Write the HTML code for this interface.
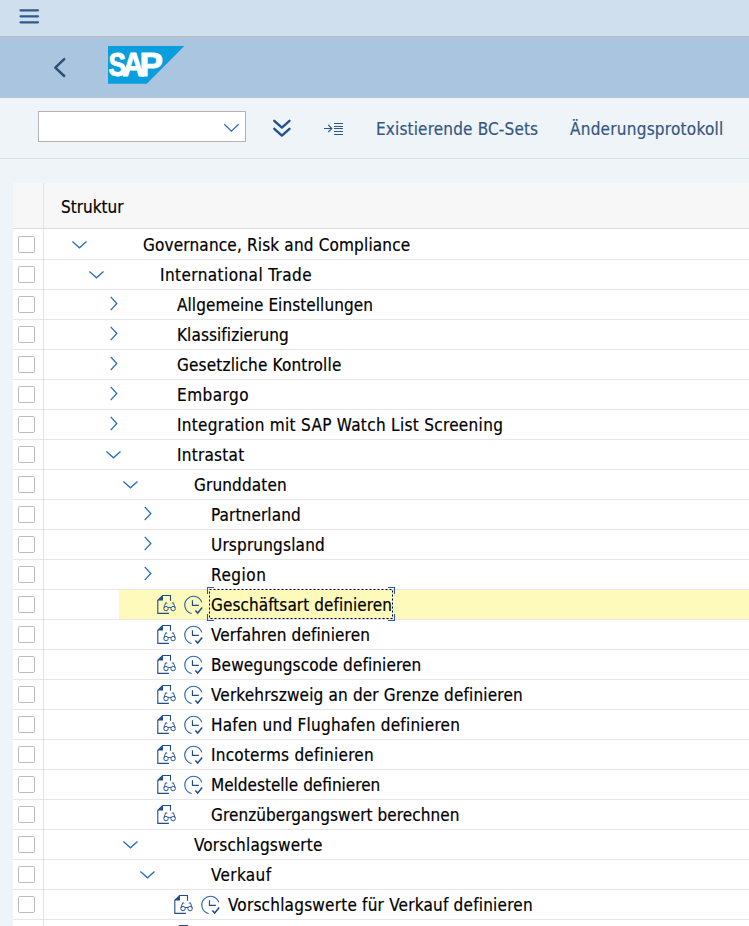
<!DOCTYPE html>
<html lang="de"><head><meta charset="utf-8"><title>SAP</title>
<style>
html,body{margin:0;padding:0}
body{width:749px;height:926px;overflow:hidden;position:relative;background:#eff4f9;font-family:"DejaVu Sans Condensed","DejaVu Sans","Liberation Sans",sans-serif;font-size:17px;color:#000}
.abs{position:absolute}
#top{left:0;top:0;width:749px;height:36px;background:#cfdfed}
#topline{left:0;top:36px;width:749px;height:1px;background:#bdbab8}
#hdr{left:0;top:37px;width:749px;height:61px;background:#a9c5df}
#tb{left:0;top:98px;width:749px;height:60px;background:#eff4f9}
#tbline{left:0;top:158px;width:749px;height:1px;background:#d3e0ef}
#sel{left:38px;top:111px;width:206px;height:29px;background:#fff;border:1px solid #b3b3b3;box-sizing:content-box}
.tbtxt{top:118px;line-height:22px;color:#34587f;white-space:nowrap;-webkit-text-stroke:0.2px #34587f}
#tbl{left:13px;top:183px;width:736px;height:743px;background:#fff}
#th{left:13px;top:183px;width:736px;height:45px;background:#f7f7f7}
#thline{left:13px;top:228px;width:736px;height:1px;background:#dedede}
#vsep{left:43px;top:183px;width:1px;height:743px;background:#e3e3e3}
.rl{left:13px;width:736px;height:1px;background:#e6e6e6}
.cb{left:18px;width:15px;height:15px;border:1px solid #bcbcbc;border-radius:1.5px;background:#fff}
.lbl{line-height:30px;height:30px;white-space:nowrap;color:#000;-webkit-text-stroke:0.2px #000}
svg{position:absolute;overflow:visible}
</style></head>
<body>
<div id="top" class="abs"></div><div id="topline" class="abs"></div><div id="hdr" class="abs"></div><div id="tb" class="abs"></div><div id="tbline" class="abs"></div>
<svg style="left:0;top:0" width="60" height="36"><g stroke="#2f5b8a" stroke-width="2.2" stroke-linecap="round"><path d="M20.5 10.3H38"/><path d="M20.5 16.3H38"/><path d="M20.5 22.3H38"/></g></svg>
<svg style="left:0;top:37px" width="100" height="61"><path d="M64.2 22.2L55.3 30.6L64.2 39" fill="none" stroke="#2c4f78" stroke-width="2.5" stroke-linecap="round" stroke-linejoin="round"/></svg>
<svg style="left:108px;top:46px" width="77" height="38"><path d="M0 0H76.3L38.8 37.8H0Z" fill="#0a9edc"/><g font-family="'Liberation Sans',sans-serif" font-weight="bold" font-size="32.5" fill="#fff" stroke="#fff" stroke-width="0.9" stroke-linejoin="miter"><text x="0.6" y="29.6" textLength="17.6" lengthAdjust="spacingAndGlyphs">S</text><text x="14.6" y="29.6" textLength="21.5" lengthAdjust="spacingAndGlyphs">A</text><text x="31.6" y="29.6" textLength="23.5" lengthAdjust="spacingAndGlyphs">P</text></g></svg>
<div id="sel" class="abs"></div>
<svg style="left:220px;top:118px" width="24" height="18"><path d="M4.3 6.3L11.45 13.2L18.6 6.3" fill="none" stroke="#2a6db8" stroke-width="1.3"/></svg>
<svg style="left:268px;top:112px" width="30" height="30"><g fill="none" stroke="#22528a" stroke-width="2.4" stroke-linecap="round" stroke-linejoin="round"><path d="M6.3 8.8L13.9 15.6L21.5 8.8"/><path d="M6.3 16.8L13.9 23.6L21.5 16.8"/></g></svg>
<svg style="left:320px;top:115px" width="30" height="26"><g fill="none" stroke="#2f5a88" stroke-width="1"><path d="M4 13.5H12"/><path d="M8.2 10L11.9 13.5L8.2 17" stroke-width="1.1"/><path d="M14 8.5H23M14 11.5H23M14 13.5H23M14 16.5H23M14 19.5H23"/></g></svg>
<div class="abs tbtxt" id="t1" style="left:376px;letter-spacing:0.158px">Existierende BC-Sets</div>
<div class="abs tbtxt" id="t2" style="left:570px;letter-spacing:0.247px">Änderungsprotokoll</div>
<div id="tbl" class="abs"></div><div id="th" class="abs"></div><div id="thline" class="abs"></div>
<div class="abs lbl" id="hs" style="left:61px;top:192px">Struktur</div>
<div class="abs rl" style="top:259px"></div>
<div class="abs cb" style="top:236px"></div>
<svg style="left:70.8px;top:240px" width="18" height="12"><path d="M1.4 1.4L8.45 7.8L15.5 1.4" fill="none" stroke="#2a6db8" stroke-width="1.3"/></svg>
<div class="abs lbl" id="l0" style="left:143px;top:230px;letter-spacing:0.167px">Governance, Risk and Compliance</div>
<div class="abs rl" style="top:289px"></div>
<div class="abs cb" style="top:266px"></div>
<svg style="left:87.8px;top:270px" width="18" height="12"><path d="M1.4 1.4L8.45 7.8L15.5 1.4" fill="none" stroke="#2a6db8" stroke-width="1.3"/></svg>
<div class="abs lbl" id="l1" style="left:160px;top:260px;letter-spacing:0.422px">International Trade</div>
<div class="abs rl" style="top:319px"></div>
<div class="abs cb" style="top:296px"></div>
<svg style="left:109.8px;top:295px" width="12" height="18"><path d="M0.7 1.9L6.8 8.5L0.7 15.1" fill="none" stroke="#2a6db8" stroke-width="1.3"/></svg>
<div class="abs lbl" id="l2" style="left:177px;top:290px;letter-spacing:0.070px">Allgemeine Einstellungen</div>
<div class="abs rl" style="top:349px"></div>
<div class="abs cb" style="top:326px"></div>
<svg style="left:109.8px;top:325px" width="12" height="18"><path d="M0.7 1.9L6.8 8.5L0.7 15.1" fill="none" stroke="#2a6db8" stroke-width="1.3"/></svg>
<div class="abs lbl" id="l3" style="left:177px;top:320px;letter-spacing:0.086px">Klassifizierung</div>
<div class="abs rl" style="top:379px"></div>
<div class="abs cb" style="top:356px"></div>
<svg style="left:109.8px;top:355px" width="12" height="18"><path d="M0.7 1.9L6.8 8.5L0.7 15.1" fill="none" stroke="#2a6db8" stroke-width="1.3"/></svg>
<div class="abs lbl" id="l4" style="left:177px;top:350px;letter-spacing:0.170px">Gesetzliche Kontrolle</div>
<div class="abs rl" style="top:409px"></div>
<div class="abs cb" style="top:386px"></div>
<svg style="left:109.8px;top:385px" width="12" height="18"><path d="M0.7 1.9L6.8 8.5L0.7 15.1" fill="none" stroke="#2a6db8" stroke-width="1.3"/></svg>
<div class="abs lbl" id="l5" style="left:177px;top:380px;letter-spacing:0.467px">Embargo</div>
<div class="abs rl" style="top:439px"></div>
<div class="abs cb" style="top:416px"></div>
<svg style="left:109.8px;top:415px" width="12" height="18"><path d="M0.7 1.9L6.8 8.5L0.7 15.1" fill="none" stroke="#2a6db8" stroke-width="1.3"/></svg>
<div class="abs lbl" id="l6" style="left:177px;top:410px;letter-spacing:0.308px">Integration mit SAP Watch List Screening</div>
<div class="abs rl" style="top:469px"></div>
<div class="abs cb" style="top:446px"></div>
<svg style="left:104.8px;top:450px" width="18" height="12"><path d="M1.4 1.4L8.45 7.8L15.5 1.4" fill="none" stroke="#2a6db8" stroke-width="1.3"/></svg>
<div class="abs lbl" id="l7" style="left:177px;top:440px;letter-spacing:0.250px">Intrastat</div>
<div class="abs rl" style="top:499px"></div>
<div class="abs cb" style="top:476px"></div>
<svg style="left:121.8px;top:480px" width="18" height="12"><path d="M1.4 1.4L8.45 7.8L15.5 1.4" fill="none" stroke="#2a6db8" stroke-width="1.3"/></svg>
<div class="abs lbl" id="l8" style="left:194px;top:470px;letter-spacing:0.133px">Grunddaten</div>
<div class="abs rl" style="top:529px"></div>
<div class="abs cb" style="top:506px"></div>
<svg style="left:143.8px;top:505px" width="12" height="18"><path d="M0.7 1.9L6.8 8.5L0.7 15.1" fill="none" stroke="#2a6db8" stroke-width="1.3"/></svg>
<div class="abs lbl" id="l9" style="left:211px;top:500px;letter-spacing:0.120px">Partnerland</div>
<div class="abs rl" style="top:559px"></div>
<div class="abs cb" style="top:536px"></div>
<svg style="left:143.8px;top:535px" width="12" height="18"><path d="M0.7 1.9L6.8 8.5L0.7 15.1" fill="none" stroke="#2a6db8" stroke-width="1.3"/></svg>
<div class="abs lbl" id="l10" style="left:211px;top:530px;letter-spacing:0.183px">Ursprungsland</div>
<div class="abs rl" style="top:589px"></div>
<div class="abs cb" style="top:566px"></div>
<svg style="left:143.8px;top:565px" width="12" height="18"><path d="M0.7 1.9L6.8 8.5L0.7 15.1" fill="none" stroke="#2a6db8" stroke-width="1.3"/></svg>
<div class="abs lbl" id="l11" style="left:211px;top:560px;letter-spacing:0.520px">Region</div>
<div class="abs" style="left:119px;top:590px;width:630px;height:29px;background:#fdfabb"></div>
<div class="abs rl" style="top:619px"></div>
<div class="abs cb" style="top:596px"></div>
<svg style="left:157px;top:595px" width="20" height="20"><g fill="none" stroke="#1f4e87" stroke-width="1.1"><path d="M13.5 5.8V0.5H5.6L0.8 5.3V18.4H11.9"/><path d="M0.8 5.6L6 0.4V5.6Z" fill="#1f4e87" stroke="none"/><g stroke-width="0.95" stroke="#22528c"><circle cx="9" cy="13.6" r="2.2"/><circle cx="16.1" cy="13.6" r="2.2"/><path d="M6.9 12.8L8.7 7.7L10.3 8.3M18.2 12.8L16.4 7.7L14.8 8.3M11 12.4H14.1"/></g></g></svg>
<svg style="left:184px;top:595px" width="20" height="20"><g fill="none" stroke="#2a65ac" stroke-width="1.15"><path d="M7.6 18.5A8.7 8.7 0 1 1 17.8 7.4"/><path d="M8.45 5.2V10.4H14.9" stroke="#1f4e87"/><path d="M11.4 15.4L13.7 18L18.2 12.6" stroke="#1f4e87" stroke-width="1.5"/></g></svg>
<div class="abs lbl" id="l12" style="left:211px;top:590px;letter-spacing:0.073px">Geschäftsart definieren</div>
<svg style="left:0;top:0" width="749" height="926"><rect x="209.5" y="589.5" width="183" height="29" fill="none" stroke="#e4eefb" stroke-width="1"/><rect x="209.5" y="589.5" width="183" height="29" fill="none" stroke="#000" stroke-width="1" stroke-dasharray="2 2"/><g fill="none" stroke="#2f5f92" stroke-width="1.1"><path d="M214 587.5H207.5V594"/><path d="M388 587.5H394.5V594"/><path d="M214 620.5H207.5V614"/><path d="M388 620.5H394.5V614"/></g></svg>
<div class="abs rl" style="top:649px"></div>
<div class="abs cb" style="top:626px"></div>
<svg style="left:157px;top:625px" width="20" height="20"><g fill="none" stroke="#1f4e87" stroke-width="1.1"><path d="M13.5 5.8V0.5H5.6L0.8 5.3V18.4H11.9"/><path d="M0.8 5.6L6 0.4V5.6Z" fill="#1f4e87" stroke="none"/><g stroke-width="0.95" stroke="#22528c"><circle cx="9" cy="13.6" r="2.2"/><circle cx="16.1" cy="13.6" r="2.2"/><path d="M6.9 12.8L8.7 7.7L10.3 8.3M18.2 12.8L16.4 7.7L14.8 8.3M11 12.4H14.1"/></g></g></svg>
<svg style="left:184px;top:625px" width="20" height="20"><g fill="none" stroke="#2a65ac" stroke-width="1.15"><path d="M7.6 18.5A8.7 8.7 0 1 1 17.8 7.4"/><path d="M8.45 5.2V10.4H14.9" stroke="#1f4e87"/><path d="M11.4 15.4L13.7 18L18.2 12.6" stroke="#1f4e87" stroke-width="1.5"/></g></svg>
<div class="abs lbl" id="l13" style="left:211px;top:620px;letter-spacing:0.137px">Verfahren definieren</div>
<div class="abs rl" style="top:679px"></div>
<div class="abs cb" style="top:656px"></div>
<svg style="left:157px;top:655px" width="20" height="20"><g fill="none" stroke="#1f4e87" stroke-width="1.1"><path d="M13.5 5.8V0.5H5.6L0.8 5.3V18.4H11.9"/><path d="M0.8 5.6L6 0.4V5.6Z" fill="#1f4e87" stroke="none"/><g stroke-width="0.95" stroke="#22528c"><circle cx="9" cy="13.6" r="2.2"/><circle cx="16.1" cy="13.6" r="2.2"/><path d="M6.9 12.8L8.7 7.7L10.3 8.3M18.2 12.8L16.4 7.7L14.8 8.3M11 12.4H14.1"/></g></g></svg>
<svg style="left:184px;top:655px" width="20" height="20"><g fill="none" stroke="#2a65ac" stroke-width="1.15"><path d="M7.6 18.5A8.7 8.7 0 1 1 17.8 7.4"/><path d="M8.45 5.2V10.4H14.9" stroke="#1f4e87"/><path d="M11.4 15.4L13.7 18L18.2 12.6" stroke="#1f4e87" stroke-width="1.5"/></g></svg>
<div class="abs lbl" id="l14" style="left:211px;top:650px;letter-spacing:0.122px">Bewegungscode definieren</div>
<div class="abs rl" style="top:709px"></div>
<div class="abs cb" style="top:686px"></div>
<svg style="left:157px;top:685px" width="20" height="20"><g fill="none" stroke="#1f4e87" stroke-width="1.1"><path d="M13.5 5.8V0.5H5.6L0.8 5.3V18.4H11.9"/><path d="M0.8 5.6L6 0.4V5.6Z" fill="#1f4e87" stroke="none"/><g stroke-width="0.95" stroke="#22528c"><circle cx="9" cy="13.6" r="2.2"/><circle cx="16.1" cy="13.6" r="2.2"/><path d="M6.9 12.8L8.7 7.7L10.3 8.3M18.2 12.8L16.4 7.7L14.8 8.3M11 12.4H14.1"/></g></g></svg>
<svg style="left:184px;top:685px" width="20" height="20"><g fill="none" stroke="#2a65ac" stroke-width="1.15"><path d="M7.6 18.5A8.7 8.7 0 1 1 17.8 7.4"/><path d="M8.45 5.2V10.4H14.9" stroke="#1f4e87"/><path d="M11.4 15.4L13.7 18L18.2 12.6" stroke="#1f4e87" stroke-width="1.5"/></g></svg>
<div class="abs lbl" id="l15" style="left:211px;top:680px;letter-spacing:0.162px">Verkehrszweig an der Grenze definieren</div>
<div class="abs rl" style="top:739px"></div>
<div class="abs cb" style="top:716px"></div>
<svg style="left:157px;top:715px" width="20" height="20"><g fill="none" stroke="#1f4e87" stroke-width="1.1"><path d="M13.5 5.8V0.5H5.6L0.8 5.3V18.4H11.9"/><path d="M0.8 5.6L6 0.4V5.6Z" fill="#1f4e87" stroke="none"/><g stroke-width="0.95" stroke="#22528c"><circle cx="9" cy="13.6" r="2.2"/><circle cx="16.1" cy="13.6" r="2.2"/><path d="M6.9 12.8L8.7 7.7L10.3 8.3M18.2 12.8L16.4 7.7L14.8 8.3M11 12.4H14.1"/></g></g></svg>
<svg style="left:184px;top:715px" width="20" height="20"><g fill="none" stroke="#2a65ac" stroke-width="1.15"><path d="M7.6 18.5A8.7 8.7 0 1 1 17.8 7.4"/><path d="M8.45 5.2V10.4H14.9" stroke="#1f4e87"/><path d="M11.4 15.4L13.7 18L18.2 12.6" stroke="#1f4e87" stroke-width="1.5"/></g></svg>
<div class="abs lbl" id="l16" style="left:211px;top:710px;letter-spacing:0.234px">Hafen und Flughafen definieren</div>
<div class="abs rl" style="top:769px"></div>
<div class="abs cb" style="top:746px"></div>
<svg style="left:157px;top:745px" width="20" height="20"><g fill="none" stroke="#1f4e87" stroke-width="1.1"><path d="M13.5 5.8V0.5H5.6L0.8 5.3V18.4H11.9"/><path d="M0.8 5.6L6 0.4V5.6Z" fill="#1f4e87" stroke="none"/><g stroke-width="0.95" stroke="#22528c"><circle cx="9" cy="13.6" r="2.2"/><circle cx="16.1" cy="13.6" r="2.2"/><path d="M6.9 12.8L8.7 7.7L10.3 8.3M18.2 12.8L16.4 7.7L14.8 8.3M11 12.4H14.1"/></g></g></svg>
<svg style="left:184px;top:745px" width="20" height="20"><g fill="none" stroke="#2a65ac" stroke-width="1.15"><path d="M7.6 18.5A8.7 8.7 0 1 1 17.8 7.4"/><path d="M8.45 5.2V10.4H14.9" stroke="#1f4e87"/><path d="M11.4 15.4L13.7 18L18.2 12.6" stroke="#1f4e87" stroke-width="1.5"/></g></svg>
<div class="abs lbl" id="l17" style="left:211px;top:740px;letter-spacing:0.232px">Incoterms definieren</div>
<div class="abs rl" style="top:799px"></div>
<div class="abs cb" style="top:776px"></div>
<svg style="left:157px;top:775px" width="20" height="20"><g fill="none" stroke="#1f4e87" stroke-width="1.1"><path d="M13.5 5.8V0.5H5.6L0.8 5.3V18.4H11.9"/><path d="M0.8 5.6L6 0.4V5.6Z" fill="#1f4e87" stroke="none"/><g stroke-width="0.95" stroke="#22528c"><circle cx="9" cy="13.6" r="2.2"/><circle cx="16.1" cy="13.6" r="2.2"/><path d="M6.9 12.8L8.7 7.7L10.3 8.3M18.2 12.8L16.4 7.7L14.8 8.3M11 12.4H14.1"/></g></g></svg>
<svg style="left:184px;top:775px" width="20" height="20"><g fill="none" stroke="#2a65ac" stroke-width="1.15"><path d="M7.6 18.5A8.7 8.7 0 1 1 17.8 7.4"/><path d="M8.45 5.2V10.4H14.9" stroke="#1f4e87"/><path d="M11.4 15.4L13.7 18L18.2 12.6" stroke="#1f4e87" stroke-width="1.5"/></g></svg>
<div class="abs lbl" id="l18" style="left:211px;top:770px;letter-spacing:0.000px">Meldestelle definieren</div>
<div class="abs rl" style="top:829px"></div>
<div class="abs cb" style="top:806px"></div>
<svg style="left:157px;top:805px" width="20" height="20"><g fill="none" stroke="#1f4e87" stroke-width="1.1"><path d="M13.5 5.8V0.5H5.6L0.8 5.3V18.4H11.9"/><path d="M0.8 5.6L6 0.4V5.6Z" fill="#1f4e87" stroke="none"/><g stroke-width="0.95" stroke="#22528c"><circle cx="9" cy="13.6" r="2.2"/><circle cx="16.1" cy="13.6" r="2.2"/><path d="M6.9 12.8L8.7 7.7L10.3 8.3M18.2 12.8L16.4 7.7L14.8 8.3M11 12.4H14.1"/></g></g></svg>
<div class="abs lbl" id="l19" style="left:211px;top:800px;letter-spacing:0.067px">Grenzübergangswert berechnen</div>
<div class="abs rl" style="top:859px"></div>
<div class="abs cb" style="top:836px"></div>
<svg style="left:121.8px;top:840px" width="18" height="12"><path d="M1.4 1.4L8.45 7.8L15.5 1.4" fill="none" stroke="#2a6db8" stroke-width="1.3"/></svg>
<div class="abs lbl" id="l20" style="left:194px;top:830px;letter-spacing:0.186px">Vorschlagswerte</div>
<div class="abs rl" style="top:889px"></div>
<div class="abs cb" style="top:866px"></div>
<svg style="left:138.8px;top:870px" width="18" height="12"><path d="M1.4 1.4L8.45 7.8L15.5 1.4" fill="none" stroke="#2a6db8" stroke-width="1.3"/></svg>
<div class="abs lbl" id="l21" style="left:211px;top:860px;letter-spacing:0.367px">Verkauf</div>
<div class="abs rl" style="top:919px"></div>
<div class="abs cb" style="top:896px"></div>
<svg style="left:174px;top:895px" width="20" height="20"><g fill="none" stroke="#1f4e87" stroke-width="1.1"><path d="M13.5 5.8V0.5H5.6L0.8 5.3V18.4H11.9"/><path d="M0.8 5.6L6 0.4V5.6Z" fill="#1f4e87" stroke="none"/><g stroke-width="0.95" stroke="#22528c"><circle cx="9" cy="13.6" r="2.2"/><circle cx="16.1" cy="13.6" r="2.2"/><path d="M6.9 12.8L8.7 7.7L10.3 8.3M18.2 12.8L16.4 7.7L14.8 8.3M11 12.4H14.1"/></g></g></svg>
<svg style="left:201px;top:895px" width="20" height="20"><g fill="none" stroke="#2a65ac" stroke-width="1.15"><path d="M7.6 18.5A8.7 8.7 0 1 1 17.8 7.4"/><path d="M8.45 5.2V10.4H14.9" stroke="#1f4e87"/><path d="M11.4 15.4L13.7 18L18.2 12.6" stroke="#1f4e87" stroke-width="1.5"/></g></svg>
<div class="abs lbl" id="l22" style="left:228px;top:890px;letter-spacing:0.216px">Vorschlagswerte für Verkauf definieren</div>
<div class="abs rl" style="top:949px"></div>
<div class="abs cb" style="top:926px"></div>
<svg style="left:174px;top:925px" width="20" height="20"><g fill="none" stroke="#1f4e87" stroke-width="1.1"><path d="M13.5 5.8V0.5H5.6L0.8 5.3V18.4H11.9"/><path d="M0.8 5.6L6 0.4V5.6Z" fill="#1f4e87" stroke="none"/><g stroke-width="0.95" stroke="#22528c"><circle cx="9" cy="13.6" r="2.2"/><circle cx="16.1" cy="13.6" r="2.2"/><path d="M6.9 12.8L8.7 7.7L10.3 8.3M18.2 12.8L16.4 7.7L14.8 8.3M11 12.4H14.1"/></g></g></svg>
<div id="vsep" class="abs"></div>
</body></html>
